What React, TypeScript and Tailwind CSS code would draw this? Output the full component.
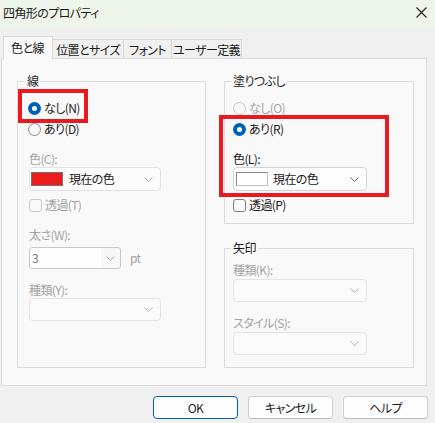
import React from "react";

type RadioState = "on" | "off" | "disabled";

function Radio({ state, label }: { state: RadioState; label: string }) {
  return (
    <div className="flex items-center h-[16px]">
      {state === "on" ? (
        <span className="w-[13px] h-[13px] rounded-full bg-[#005fb8] flex items-center justify-center shrink-0">
          <span className="w-[5px] h-[5px] rounded-full bg-white" />
        </span>
      ) : (
        <span
          className={
            state === "off"
              ? "w-[13px] h-[13px] rounded-full border border-[#878787] bg-[#fafafa] shrink-0"
              : "w-[13px] h-[13px] rounded-full border border-[#c9c9c9] bg-[#f9f9f9] shrink-0"
          }
        />
      )}
      <span className={state === "disabled" ? "ml-[3px] text-[#a3a3a3]" : "ml-[3px] text-[#1b1b1b]"}>
        {label}
      </span>
    </div>
  );
}

function Check({ label, disabled }: { label: string; disabled?: boolean }) {
  return (
    <div className="flex items-center h-[16px]">
      <span
        className={
          disabled
            ? "w-[13px] h-[13px] rounded-[3px] border border-[#c9c9c9] bg-[#f9f9f9] shrink-0"
            : "w-[13px] h-[13px] rounded-[3px] border border-[#7d7d7d] bg-[#fafafa] shrink-0"
        }
      />
      <span className={disabled ? "ml-[3px] text-[#a3a3a3]" : "ml-[3px] text-[#1b1b1b]"}>{label}</span>
    </div>
  );
}

function Chevron({ color }: { color: string }) {
  return (
    <svg width="9" height="5" viewBox="0 0 9 5" className="shrink-0">
      <polyline points="0.5,0.5 4.5,4.5 8.5,0.5" fill="none" stroke={color} strokeWidth="1" />
    </svg>
  );
}

function Label({ text, disabled }: { text: string; disabled?: boolean }) {
  return (
    <div className={disabled ? "h-[16px] leading-[16px] text-[#a3a3a3]" : "h-[16px] leading-[16px] text-[#1b1b1b]"}>
      {text}
    </div>
  );
}

export default function App() {
  return (
    <div className="relative w-[435px] h-[423px] overflow-hidden bg-[#f0f0f0] flex flex-col text-[12px] leading-[16px] tracking-[-0.6px] whitespace-nowrap text-[#1b1b1b] font-['Noto_Sans_CJK_JP',sans-serif] [font-feature-settings:'palt']">
      {/* title bar */}
      <div className="h-[29px] shrink-0 bg-[#eef5ea] flex items-start">
        <div className="pl-[3px] pt-[5px]">四角形のプロパティ</div>
        <svg width="11" height="11" viewBox="0 0 11 11" className="ml-auto mr-[8px] mt-[7px]">
          <path d="M0.5 0.5 L10.5 10.5 M10.5 0.5 L0.5 10.5" stroke="#1f1f1f" strokeWidth="1.1" />
        </svg>
      </div>

      {/* tab strip */}
      <div className="h-[29px] shrink-0 flex items-end pl-[3px]">
        <div className="relative z-10 -mb-px w-[50px] h-[23px] border border-b-0 border-[#d9d9d9] bg-[#f9f9f9] flex items-center justify-center pr-[1px]">
          色と線
        </div>
        <div className="w-[71px] h-[19px] border-t border-r border-[#d9d9d9] flex items-center justify-center pt-[2px]">
          位置とサイズ
        </div>
        <div className="w-[48px] h-[19px] border-t border-r border-[#d9d9d9] flex items-center justify-center pt-[2px]">
          フォント
        </div>
        <div className="w-[70px] h-[19px] border-t border-r border-[#d9d9d9] flex items-center justify-center pt-[2px]">
          ユーザー定義
        </div>
      </div>

      {/* tab page */}
      <div className="ml-[1px] w-[426px] h-[328px] shrink-0 border border-[#dcdcdc] bg-[#f9f9f9] flex pl-[15px] pt-[22px]">
        {/* line group */}
        <div className="relative w-[189px] h-[287px] border border-[#dcdcdc] pl-[10px] pt-[18px] flex flex-col">
          <span className="absolute -top-[9px] left-[7px] px-[2px] bg-[#f9f9f9]">線</span>
          <Radio state="on" label="なし(N)" />
          <div className="mt-[5px]">
            <Radio state="off" label="あり(D)" />
          </div>
          <div className="mt-[14px] pl-[1px]">
            <Label text="色(C):" disabled />
          </div>
          <div className="ml-[1px] w-[132px] h-[24px] rounded-[4px] border border-[#e2e2e2] bg-[#fcfcfc] flex items-center pl-[1px] pr-[7px]">
            <span className="w-[32px] h-[14px] border border-[#6f6f6f] bg-[#ed1c1c] shrink-0" />
            <span className="ml-[6px]">現在の色</span>
            <span className="ml-auto">
              <Chevron color="#a9a9a9" />
            </span>
          </div>
          <div className="mt-[6px] pl-[1px]">
            <Check label="透過(T)" disabled />
          </div>
          <div className="mt-[14px] pl-[1px]">
            <Label text="太さ(W):" disabled />
          </div>
          <div className="mt-[4px] flex items-center">
            <div className="ml-[1px] w-[92px] h-[22px] rounded-[3px] border border-[#c8c8c8] bg-[#fdfdfd] flex items-center">
              <span className="pl-[2px] text-[#7b7b7b] w-[71px]">3</span>
              <span className="h-full flex-1 bg-[#f7f7f7] flex items-center justify-center rounded-r-[3px]">
                <Chevron color="#a9a9a9" />
              </span>
            </div>
            <span className="ml-[9px] text-[#a3a3a3]">pt</span>
          </div>
          <div className="mt-[13px] pl-[1px]">
            <Label text="種類(Y):" disabled />
          </div>
          <div className="ml-[1px] w-[132px] h-[23px] rounded-[4px] border border-[#e4e4e4] bg-[#fbfbfb] flex items-center justify-end pr-[7px]">
            <Chevron color="#b0b0b0" />
          </div>
        </div>

        {/* right column */}
        <div className="ml-[18px] w-[190px] flex flex-col">
          {/* fill group */}
          <div className="relative h-[143px] border border-[#dcdcdc] pl-[8px] pt-[18px] flex flex-col">
            <span className="absolute -top-[9px] left-[6px] px-[2px] bg-[#f9f9f9]">塗りつぶし</span>
            <Radio state="disabled" label="なし(O)" />
            <div className="mt-[5px]">
              <Radio state="on" label="あり(R)" />
            </div>
            <div className="mt-[14px]">
              <Label text="色(L):" />
            </div>
            <div className="w-[134px] h-[24px] rounded-[4px] border border-[#d4d4d4] bg-[#fdfdfd] flex items-center pl-[2px] pr-[7px]">
              <span className="w-[32px] h-[14px] border border-[#8a8a8a] border-b-[#c4c4c4] border-r-[#c4c4c4] bg-white shrink-0" />
              <span className="ml-[5px]">現在の色</span>
              <span className="ml-auto">
                <Chevron color="#6a6a6a" />
              </span>
            </div>
            <div className="mt-[6px]">
              <Check label="透過(P)" />
            </div>
          </div>

          {/* arrow group */}
          <div className="relative mt-[24px] h-[120px] border border-[#dcdcdc] pl-[8px] pt-[13px] flex flex-col">
            <span className="absolute -top-[9px] left-[6px] px-[2px] bg-[#f9f9f9]">矢印</span>
            <Label text="種類(K):" disabled />
            <div className="mt-[1px] w-[134px] h-[23px] rounded-[4px] border border-[#e4e4e4] bg-[#fbfbfb] flex items-center justify-end pr-[7px]">
              <Chevron color="#b0b0b0" />
            </div>
            <div className="mt-[13px]">
              <Label text="スタイル(S):" disabled />
            </div>
            <div className="mt-[1px] w-[134px] h-[23px] rounded-[4px] border border-[#e4e4e4] bg-[#fbfbfb] flex items-center justify-end pr-[7px]">
              <Chevron color="#b0b0b0" />
            </div>
          </div>
        </div>
      </div>

      {/* buttons */}
      <div className="mt-[10px] flex justify-end gap-[10px] pr-[7px]">
        <button className="w-[85px] h-[23px] rounded-[4px] border border-[#005fb8] bg-[#fdfdfd] flex items-center justify-center">
          OK
        </button>
        <button className="w-[85px] h-[23px] rounded-[4px] border border-[#d0d0d0] border-b-[#bdbdbd] bg-[#fdfdfd] flex items-center justify-center">
          キャンセル
        </button>
        <button className="w-[85px] h-[23px] rounded-[4px] border border-[#d0d0d0] border-b-[#bdbdbd] bg-[#fdfdfd] flex items-center justify-center">
          ヘルプ
        </button>
      </div>

      {/* highlight boxes drawn over the dialog */}
      <div className="absolute left-[18px] top-[89px] w-[70px] h-[34px] border-[4px] border-[#e8191f] pointer-events-none" />
      <div className="absolute left-[219px] top-[115px] w-[170px] h-[82px] border-[4px] border-[#e8191f] pointer-events-none" />
    </div>
  );
}
